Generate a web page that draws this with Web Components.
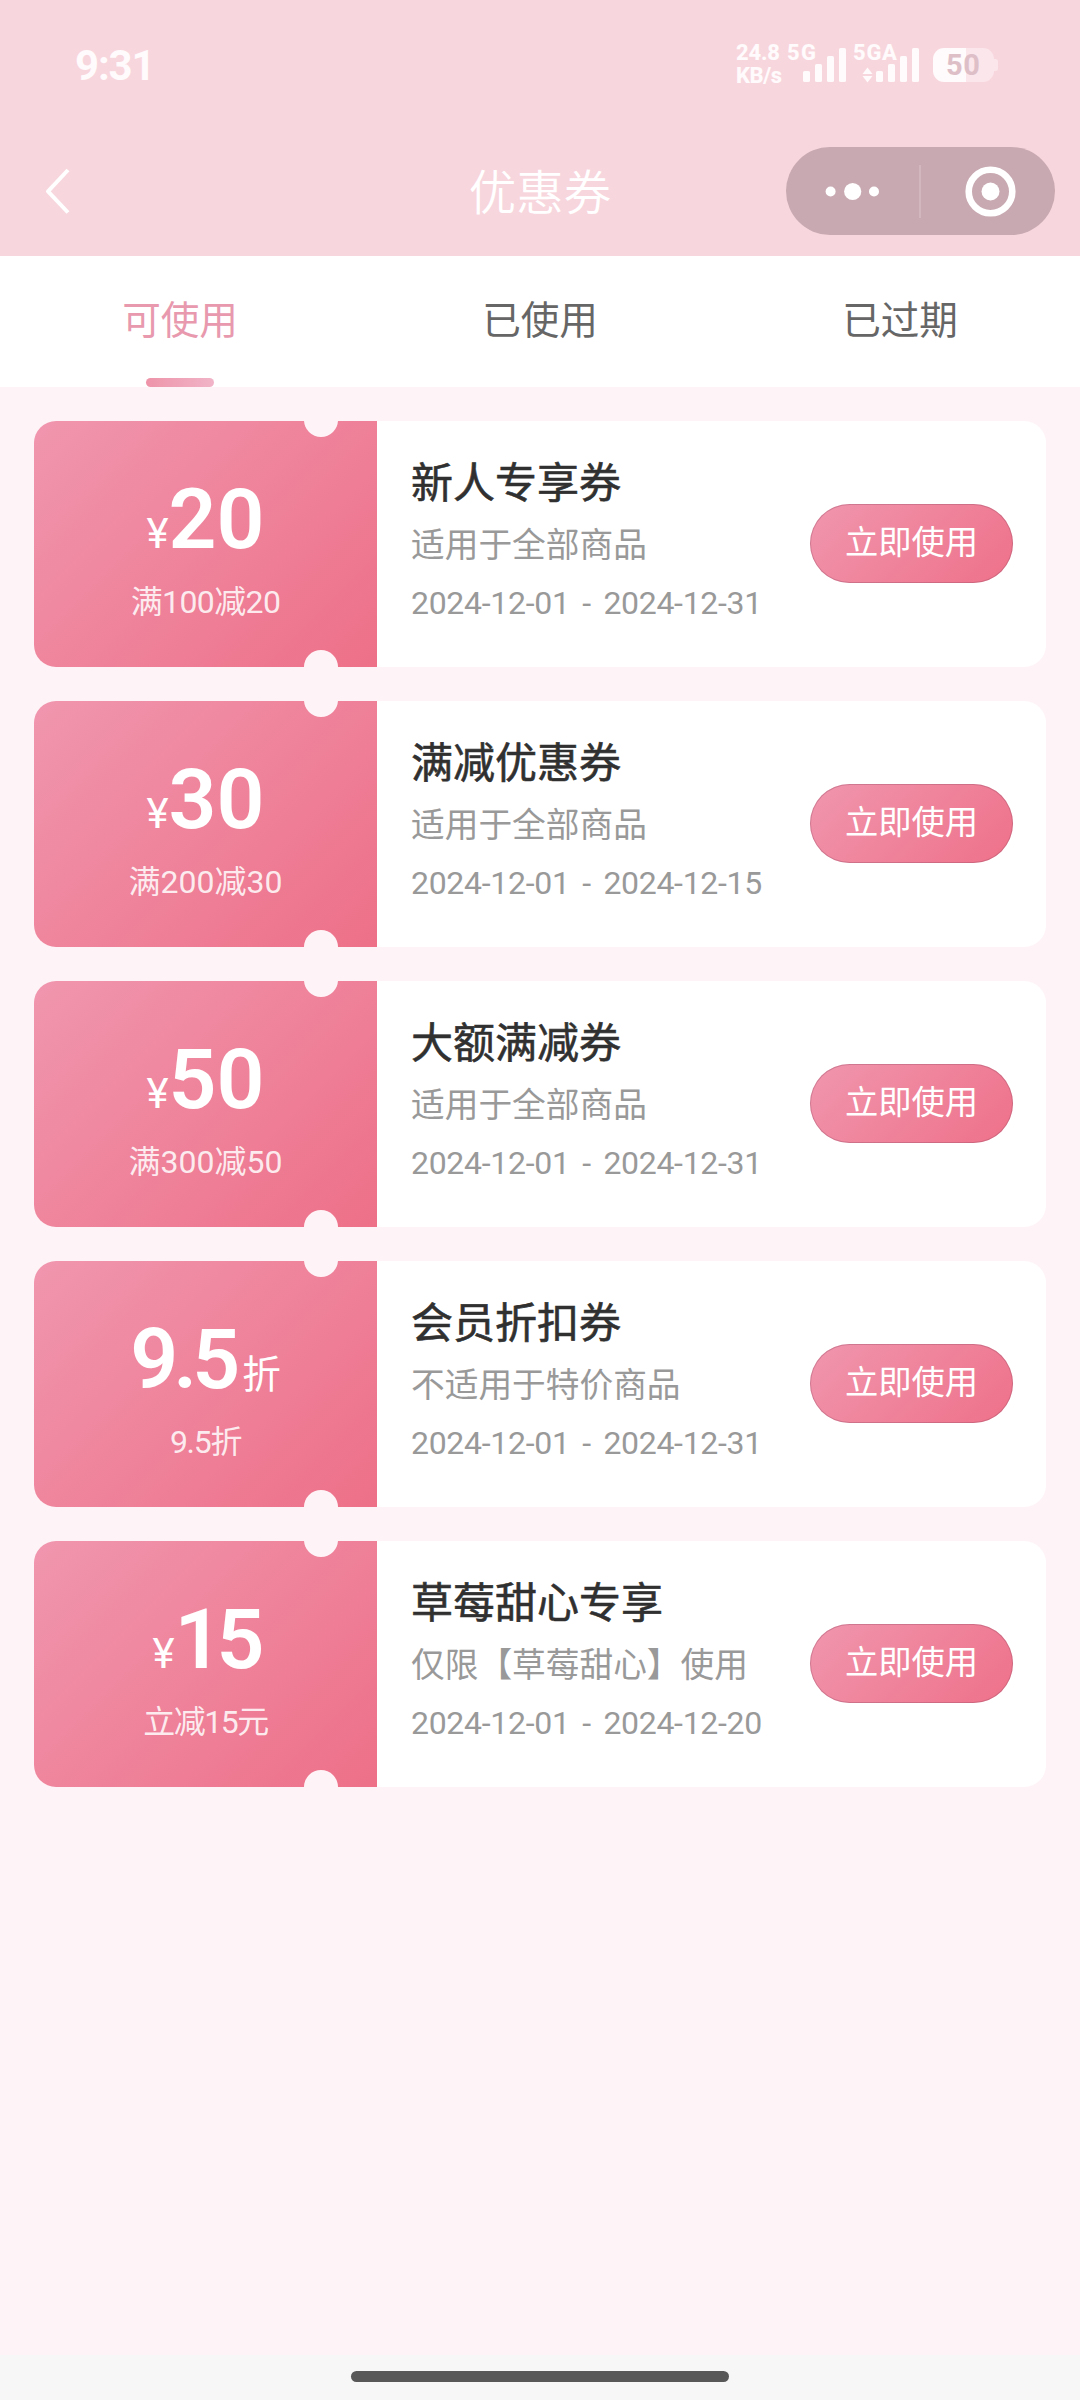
<!DOCTYPE html>
<html lang="zh-CN">
<head>
<meta charset="utf-8">
<title>优惠券</title>
<style>
body{margin:0;width:1080px;height:2400px;background:#fef4f7;overflow:hidden;font-family:Roboto,"Noto Sans CJK SC",sans-serif}
</style>
</head>
<body>
<coupon-page></coupon-page>
<script>
const define = (name, html, setup) => {
  const tpl = document.createElement('template');
  tpl.innerHTML = html;
  customElements.define(name, class extends HTMLElement {
    connectedCallback() {
      if (this.shadowRoot) return;
      this.attachShadow({mode: 'open'}).append(tpl.content.cloneNode(true));
      if (setup) setup(this, this.shadowRoot);
    }
  });
};

define('status-bar', `
<style>
:host{display:flex;justify-content:space-between;height:130px;box-sizing:border-box;padding:40px 80px 0 75px;color:#fffafb}
.time{font-size:42px;font-weight:700;line-height:52px;letter-spacing:-1.2px}
svg{display:block}
text{font-family:Roboto,sans-serif;font-weight:800;font-size:22px;fill:#fffafb}
</style>
<div class="time">9:31</div>
<svg width="265" height="50" viewBox="735 40 265 50" fill="#fffafb">
  <text x="736" y="60" textLength="44">24.8</text>
  <text x="736" y="83" textLength="46">KB/s</text>
  <text x="787" y="60" textLength="29">5G</text>
  <text x="853" y="60" textLength="44">5GA</text>
  <rect x="803" y="71" width="7" height="11" rx="1.5"/><rect x="815" y="64" width="7" height="18" rx="1.5"/>
  <rect x="827" y="56" width="7" height="26" rx="1.5"/><rect x="839" y="48" width="7" height="34" rx="1.5"/>
  <path d="M867.5 67.5l5 6.5h-10zM867.5 82.5l5-6.500h-10z"/>
  <rect x="876" y="71" width="7" height="11" rx="1.5"/><rect x="888" y="64" width="7" height="18" rx="1.5"/>
  <rect x="900" y="56" width="7" height="26" rx="1.5"/><rect x="912" y="48" width="7" height="34" rx="1.5"/>
  <path d="M966 48h17a11 11 0 0 1 11 11v12a11 11 0 0 1-11 11h-17zM994 59h1.500a2.500 2.500 0 0 1 2.500 2.500v7a2.500 2.500 0 0 1-2.500 2.500h-1.500z" fill="#fbe6eb"/>
  <path d="M966 48h-22a11 11 0 0 0-11 11v12a11 11 0 0 0 11 11h22z"/>
  <text x="946" y="75" textLength="34" style="font-size:29px;font-weight:700;fill:#debfc8">50</text>
</svg>`);

define('nav-bar', `
<style>
:host{display:grid;grid-template-columns:1fr auto 1fr;align-items:center;height:122px;box-sizing:border-box;padding:0 25px 0 25px}
.title{color:#fff;font-size:47.500px;font-weight:350;line-height:60px;padding-top:6px}
.menu{justify-self:end;width:269px;height:88px;border-radius:44px;background:#c8a9b1}
.back{padding-left:15px}
svg{display:block}
</style>
<svg class="back" width="36" height="52" viewBox="0 0 36 52" fill="none" stroke="#fff" stroke-width="4"><path d="M28 5L8 26.300L28 47.500" stroke-linejoin="round"/></svg>
<div class="title"><slot></slot></div>
<div class="menu"><svg width="269" height="88" viewBox="0 0 269 88" fill="#fff">
  <circle cx="44.600" cy="44.500" r="5"/><circle cx="66.700" cy="44.500" r="8.600"/><circle cx="88" cy="44.500" r="5"/>
  <rect x="133.500" y="18" width="1" height="53" fill="#dcc6cc"/>
  <circle cx="204.500" cy="44.500" r="21.800" fill="none" stroke="#fff" stroke-width="6.600"/><circle cx="204.500" cy="44.500" r="9"/>
</svg></div>`);

define('tab-item', `
<style>
:host{flex:1;display:flex;flex-direction:column;align-items:center;justify-content:space-between;color:#666;font-size:38.600px;line-height:56px;padding-top:37px;box-sizing:border-box}
:host([active]){color:#e899ae}
i{width:68px;height:9px;border-radius:4.500px}
:host([active]) i{background:linear-gradient(90deg,#ee94a9,#f1b4c8)}
</style><span><slot></slot></span><i></i>`);

define('tab-bar', `<style>:host{display:flex;height:131px;background:#fff}</style><slot></slot>`);

define('use-button', `
<style>
:host{display:flex;align-items:center;justify-content:center;width:203px;height:79px;box-sizing:border-box;padding-bottom:1px;border-radius:40px;background:linear-gradient(135deg,#f096ae,#ee7189);box-shadow:inset 0 0 0 1px rgba(150,75,100,.35);color:#fff;font-size:33.300px;line-height:48px}
</style><slot></slot>`);

define('coupon-card', `
<style>
:host{display:flex;height:246px;border-radius:22px;background:#fff;overflow:hidden}
.value{position:relative;width:343px;box-sizing:border-box;padding-top:49px;background:linear-gradient(135deg,#f096ae,#ed7088);color:#fff;display:flex;flex-direction:column;align-items:center}
.value:before,.value:after{content:"";position:absolute;left:270px;width:34px;height:34px;border-radius:50%;background:#fef4f7}
.value:before{top:-18px}.value:after{bottom:-17px}
.amount{display:flex;align-items:baseline;line-height:100px;height:100px}
.num{font-size:84px;font-weight:600;letter-spacing:var(--num-track,0)}
.unit{font-size:38.600px}
.pre{font-size:42px}
.post{margin-left:7px}
.cond{font-size:32px;line-height:44px;margin-top:10px;letter-spacing:var(--cond-track,0);color:rgba(255,255,255,.86)}
.info{flex:1;display:flex;flex-direction:column;padding:34px 0 0 34px}
.name{font-size:42px;font-weight:400;-webkit-text-stroke:.6px #303030;line-height:58px;color:#303030}
.scope{font-size:33.700px;line-height:50px;margin-top:8px;color:#999}
.date{font-size:32px;line-height:44px;margin-top:10px;color:#999;letter-spacing:-.3px;word-spacing:5px}
use-button{align-self:flex-start;margin:83px 33px 0 0}
</style>
<div class="value">
  <div class="amount"><span class="unit pre"></span><span class="num"></span><span class="unit post"></span></div>
  <div class="cond"></div>
</div>
<div class="info"><div class="name"><slot></slot></div><div class="scope"></div><div class="date"></div></div>
<use-button>立即使用</use-button>`, (el, root) => {
  const put = (sel, key) => {
    const node = root.querySelector(sel);
    if (el.getAttribute(key)) node.textContent = el.getAttribute(key); else node.remove();
  };
  put('.pre', 'prefix'); put('.num', 'num'); put('.post', 'suffix');
  put('.cond', 'cond'); put('.scope', 'scope'); put('.date', 'date');
});

define('home-indicator', `
<style>:host{display:flex;justify-content:center;height:45px;box-sizing:border-box;padding-top:16px;background:#f7f7f7}
i{width:378px;height:11px;border-radius:5.500px;background:#585858}</style><i></i>`);

define('coupon-page', `
<style>
:host{display:flex;flex-direction:column;width:1080px;height:2400px;background:#fef4f7}
header{background:#f8d6dd;height:256px}
main{flex:1;display:flex;flex-direction:column;gap:34px;padding:34px}
</style>
<header><status-bar></status-bar><nav-bar>优惠券</nav-bar></header>
<tab-bar><tab-item active>可使用</tab-item><tab-item>已使用</tab-item><tab-item>已过期</tab-item></tab-bar>
<main>
<coupon-card style="--cond-track:-.6px" prefix="¥" num="20" cond="满100减20" scope="适用于全部商品" date="2024-12-01 - 2024-12-31">新人专享券</coupon-card>
<coupon-card prefix="¥" num="30" cond="满200减30" scope="适用于全部商品" date="2024-12-01 - 2024-12-15">满减优惠券</coupon-card>
<coupon-card prefix="¥" num="50" cond="满300减50" scope="适用于全部商品" date="2024-12-01 - 2024-12-31">大额满减券</coupon-card>
<coupon-card style="--num-track:-5px;--cond-track:-1.3px" num="9.5" suffix="折" cond="9.5折" scope="不适用于特价商品" date="2024-12-01 - 2024-12-31">会员折扣券</coupon-card>
<coupon-card style="--num-track:-6px;--cond-track:-1.5px" prefix="¥" num="15" cond="立减15元" scope="仅限【草莓甜心】使用" date="2024-12-01 - 2024-12-20">草莓甜心专享</coupon-card>
</main>
<home-indicator></home-indicator>`);
</script>
</body>
</html>
